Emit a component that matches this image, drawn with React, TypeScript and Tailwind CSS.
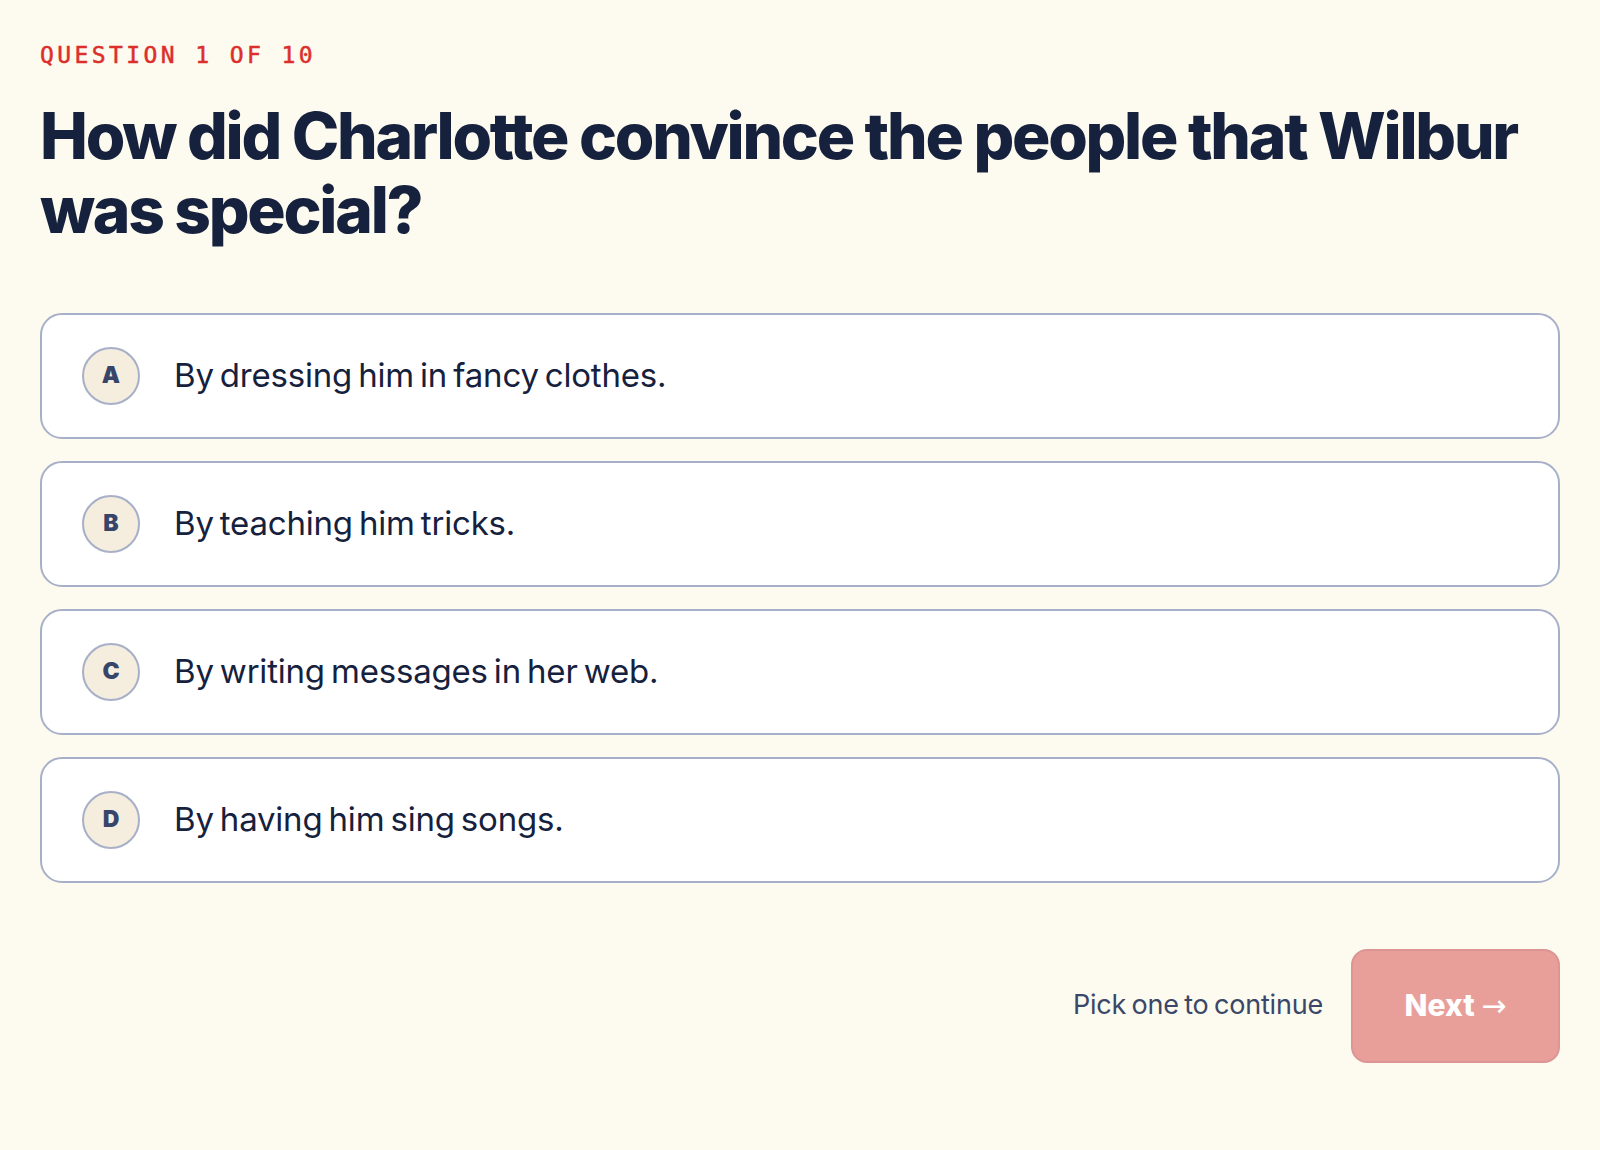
import { useState } from "react";

const options = [
  { key: "A", text: "By dressing him in fancy clothes." },
  { key: "B", text: "By teaching him tricks." },
  { key: "C", text: "By writing messages in her web." },
  { key: "D", text: "By having him sing songs." },
];

function OptionCard(props: {
  letter: string;
  text: string;
  selected: boolean;
  onPick: () => void;
}) {
  return (
    <button
      onClick={props.onPick}
      className={`flex h-[126px] w-full items-center gap-[34px] rounded-[22px] border-2 bg-white px-10 text-left ${
        props.selected ? "border-[#dc2626]" : "border-[#a7b0c8]"
      }`}
    >
      <span className="flex h-[58px] w-[58px] shrink-0 items-center justify-center rounded-full border-2 border-[#a7b0c8] bg-[#f5eddd] font-['Inter'] text-[23px] font-black text-[#37456a]">
        {props.letter}
      </span>
      <span className="font-['Inter'] text-[33px] tracking-[-0.2px] [word-spacing:-3px] text-[#16213d]">
        {props.text}
      </span>
    </button>
  );
}

export default function App() {
  const [picked, setPicked] = useState<null | string>(null);
  return (
    <div className="min-h-[1150px] w-full bg-[#fdfaef] px-10 pt-[38px]">
      <div className="font-['DejaVu_Sans_Mono'] text-[23px] tracking-[3.4px] text-[#dc2f2b] [-webkit-text-stroke:0.5px_#dc2f2b]">
        QUESTION 1 OF 10
      </div>
      <h1 className="mt-[26px] font-['Inter'] text-[64px] font-extrabold leading-[74px] tracking-[-2.25px] text-[#15213d]">
        How did Charlotte convince the people that Wilbur was special?
      </h1>
      <div className="mt-[66px] flex flex-col gap-[22px]">
        {options.map((o) => (
          <OptionCard
            key={o.key}
            letter={o.key}
            text={o.text}
            selected={picked === o.key}
            onPick={() => setPicked(o.key)}
          />
        ))}
      </div>
      <div className="mt-[66px] flex items-center justify-end gap-7">
        <span className="font-['Inter'] text-[27px] tracking-[-0.2px] [word-spacing:-2px] text-[#3a4768]">
          Pick one to continue
        </span>
        <button
          className={`h-[114px] w-[209px] rounded-[16px] border-2 font-['Inter'] text-[30px] font-extrabold text-white ${
            picked ? "border-[#dc2626] bg-[#dc2626]" : "border-[#dd9593] bg-[#e89e99]"
          }`}
        >
          Next <span className="font-['DejaVu_Sans'] font-normal">→</span>
        </button>
      </div>
    </div>
  );
}
